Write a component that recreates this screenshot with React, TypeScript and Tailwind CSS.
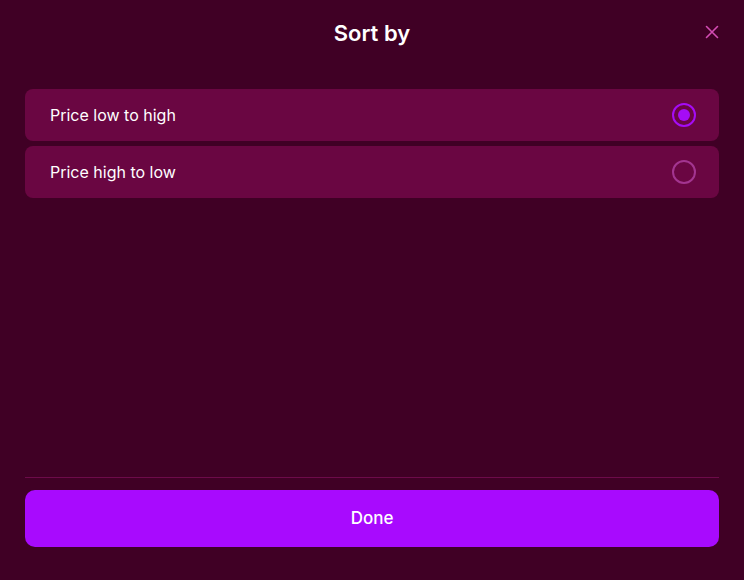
import { useState } from 'react'

const options = [
  { id: 'low', label: 'Price low to high' },
  { id: 'high', label: 'Price high to low' },
]

function Radio({ checked }: { checked: boolean }) {
  return checked ? (
    <span className="flex h-6 w-6 items-center justify-center rounded-full border-2 border-[#a50cf5]">
      <span className="h-3 w-3 rounded-full bg-[#a50cf5]" />
    </span>
  ) : (
    <span className="h-6 w-6 rounded-full border-2 border-[#a33590]" />
  )
}

export default function App() {
  const [sort, setSort] = useState('low')

  return (
    <div
      className="flex h-[580px] w-[744px] flex-col bg-[#400025] px-[25px] text-white"
      style={{ fontFamily: 'Inter, "Noto Sans", sans-serif' }}
    >
      {/* Header */}
      <div className="relative flex h-[66px] shrink-0 items-center justify-center">
        <h1 className="text-[22px] font-semibold">Sort by</h1>
        <button className="absolute right-[-1px] top-[24px] text-[#d44cb4]">
          <svg width="16" height="16" viewBox="0 0 16 16" fill="none" stroke="currentColor" strokeWidth="1.6" strokeLinecap="round">
            <path d="M2.5 2.5l11 11M13.5 2.5l-11 11" />
          </svg>
        </button>
      </div>

      {/* Options */}
      <div className="mt-[23px] flex flex-col gap-[5px]">
        {options.map(o => (
          <button
            key={o.id}
            onClick={() => setSort(o.id)}
            className="flex h-[52px] items-center justify-between rounded-lg bg-[#6a0642] pl-[25px] pr-[23px] text-left text-base"
          >
            <span>{o.label}</span>
            <Radio checked={sort === o.id} />
          </button>
        ))}
      </div>

      <div className="flex-1" />

      {/* Footer */}
      <div className="h-px bg-[#6d0b4a]" />
      <button className="mb-[33px] mt-3 h-[57px] rounded-[10px] bg-[#a80afe] text-[17px] font-medium">
        Done
      </button>
    </div>
  )
}
